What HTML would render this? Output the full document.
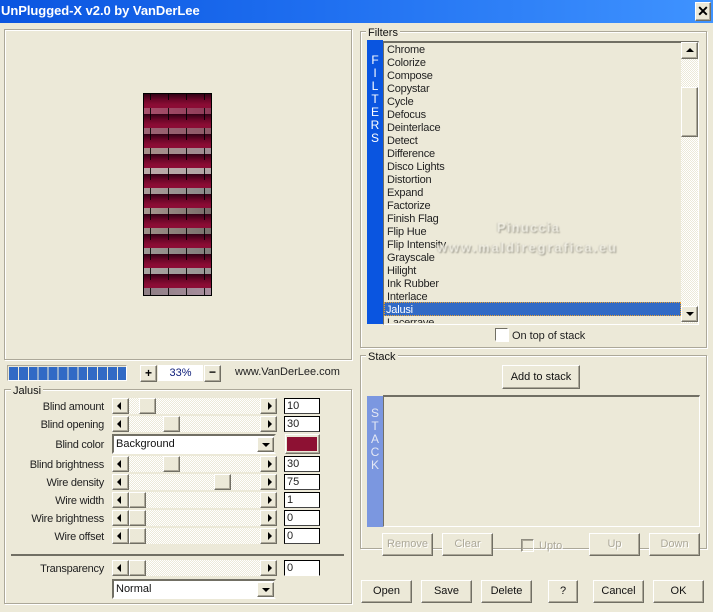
<!DOCTYPE html>
<html><head><meta charset="utf-8"><title>UnPlugged-X</title>
<style>
html,body{margin:0;padding:0;width:713px;height:612px;overflow:hidden;background:#ece9d8}
body{position:relative;font:11px/14px "Liberation Sans",sans-serif;color:#111}
div,span{position:absolute;box-sizing:border-box}
.t{white-space:nowrap}
.g{border:1px solid #aca899;box-shadow:inset 1px 1px 0 #fff,1px 1px 0 #fff}
.gl{background:#ece9d8;padding:0 2px;height:14px;white-space:nowrap}
.b{background:#ece9d8;border:1px solid;border-color:#fff #716f64 #716f64 #fff;box-shadow:inset -1px -1px 0 #aca899;text-align:center;white-space:nowrap}
.bt{height:23px;line-height:21px;top:0}
.dis{color:#aca899;text-shadow:1px 1px 0 #fff}
.sb{left:112px;width:165px;height:16px;background:repeating-conic-gradient(#ece9d8 0 25%,#fff 0 50%) 0 0/2px 2px}
.ar{width:17px;height:16px;top:0}
.l{left:4px;border-style:solid;border-width:4px 4px 4px 0;border-color:transparent #000;top:3px;width:0;height:0}
.r{left:7px;border-style:solid;border-width:4px 0 4px 4px;border-color:transparent #000;top:3px;width:0;height:0}
.u{border-style:solid;border-width:0 4px 4px;border-color:transparent transparent #000;width:0;height:0;left:5px;top:6px}
.d{border-style:solid;border-width:4px 4px 0;border-color:#000 transparent transparent;width:0;height:0;left:5px;top:6px}
.th{width:17px;height:16px;top:0}
.lb{width:100px;left:4px;text-align:right;white-space:nowrap;color:#222;letter-spacing:-.25px}
.e{left:284px;width:36px;height:16px;background:#fff;border:1px solid #000;border-bottom-color:#444;padding-left:2px;line-height:14px;color:#222}
.cb{left:112px;width:164px;height:20px;background:#fff;border:2px solid;border-color:#716f64 #ece9d8 #fff #716f64;padding-left:2px;line-height:17px;white-space:nowrap}
.it{left:387px;white-space:nowrap;height:13px;line-height:13px;color:#222;letter-spacing:-.2px}
.vl{color:#fff;left:367px;width:16px;text-align:center;height:13px;line-height:13px;font-size:12px}
.wm{font:bold 13px/16px 'Liberation Sans',sans-serif;color:#f3f1e6;text-shadow:1px 1px 1px #9a978a,-1px 0 1px #c8c5b8;white-space:nowrap;filter:blur(.4px)}
</style></head><body>

<!-- title bar -->
<div style="left:0;top:0;width:713px;height:23px;background:linear-gradient(90deg,#0a55e0,#1f6ff0 45%,#3f93ff)"></div>
<div class="t" style="left:1px;top:2px;font:bold 13px/17px 'Liberation Sans',sans-serif;color:#fff;letter-spacing:-.05px">UnPlugged-X v2.0 by VanDerLee</div>
<div class="b" style="left:695px;top:2px;width:16px;height:19px;font:bold 14px/16px 'Liberation Sans',sans-serif;color:#000">✕</div>

<!-- preview -->
<div class="g" style="left:4px;top:29px;width:348px;height:331px"></div>
<svg style="position:absolute;left:143px;top:93px" width="69" height="203" viewBox="0 0 69 203">
<defs>
<linearGradient id="dk" x1="0" y1="0" x2="0" y2="1"><stop offset="0" stop-color="#300014"/><stop offset=".4" stop-color="#6a0628"/><stop offset=".75" stop-color="#8a0c34"/><stop offset="1" stop-color="#8c0c36"/></linearGradient>
<linearGradient id="s1"><stop offset="0" stop-color="#a8506c"/><stop offset="1" stop-color="#8e3c58"/></linearGradient>
<linearGradient id="s2"><stop offset="0" stop-color="#9c6474"/><stop offset="1" stop-color="#8e5a68"/></linearGradient>
<linearGradient id="s3"><stop offset="0" stop-color="#a68e88"/><stop offset="1" stop-color="#a08c94"/></linearGradient>
<linearGradient id="s4"><stop offset="0" stop-color="#bcaaa8"/><stop offset="1" stop-color="#b0a4a4"/></linearGradient>
<linearGradient id="s5"><stop offset="0" stop-color="#ab9b98"/><stop offset="1" stop-color="#888888"/></linearGradient>
<linearGradient id="s6"><stop offset="0" stop-color="#a89890"/><stop offset="1" stop-color="#776a68"/></linearGradient>
<linearGradient id="s7"><stop offset="0" stop-color="#9e9088"/><stop offset="1" stop-color="#78706c"/></linearGradient>
<linearGradient id="s8"><stop offset="0" stop-color="#9e9894"/><stop offset="1" stop-color="#807c7a"/></linearGradient>
<linearGradient id="s9"><stop offset="0" stop-color="#a8a4a0"/><stop offset="1" stop-color="#989494"/></linearGradient>
<linearGradient id="s10"><stop offset="0" stop-color="#8e7e84"/><stop offset="1" stop-color="#a88e9e"/></linearGradient>
</defs>
<rect width="69" height="203" fill="#000"/>
<rect x="1" y="1" width="67" height="14" fill="url(#dk)"/>
<rect x="1" y="21" width="67" height="14" fill="url(#dk)"/>
<rect x="1" y="41" width="67" height="14" fill="url(#dk)"/>
<rect x="1" y="61" width="67" height="14" fill="url(#dk)"/>
<rect x="1" y="81" width="67" height="14" fill="url(#dk)"/>
<rect x="1" y="101" width="67" height="14" fill="url(#dk)"/>
<rect x="1" y="121" width="67" height="14" fill="url(#dk)"/>
<rect x="1" y="141" width="67" height="14" fill="url(#dk)"/>
<rect x="1" y="161" width="67" height="14" fill="url(#dk)"/>
<rect x="1" y="181" width="67" height="14" fill="url(#dk)"/>
<rect x="1" y="15" width="67" height="6" fill="url(#s1)"/>
<rect x="1" y="35" width="67" height="6" fill="url(#s2)"/>
<rect x="1" y="55" width="67" height="6" fill="url(#s3)"/>
<rect x="1" y="75" width="67" height="6" fill="url(#s4)"/>
<rect x="1" y="95" width="67" height="6" fill="url(#s5)"/>
<rect x="1" y="115" width="67" height="6" fill="url(#s6)"/>
<rect x="1" y="135" width="67" height="6" fill="url(#s7)"/>
<rect x="1" y="155" width="67" height="6" fill="url(#s8)"/>
<rect x="1" y="175" width="67" height="6" fill="url(#s9)"/>
<rect x="1" y="195" width="67" height="7" fill="url(#s10)"/>
<g stroke="#000" stroke-width="1" stroke-dasharray="12 8" stroke-opacity=".85">
<line x1="7.5" y1="-5" x2="7.5" y2="202"/>
<line x1="25.5" y1="-5" x2="25.5" y2="202"/>
<line x1="43.5" y1="-5" x2="43.5" y2="202"/>
<line x1="61.5" y1="-5" x2="61.5" y2="202"/>
</g>
</svg>

<!-- zoom row -->
<div style="left:7px;top:365px;width:120px;height:16px;border:1px solid;border-color:#aca899 #fff #fff #aca899"></div>
<div style="left:9px;top:367px;width:117px;height:13px;background:repeating-linear-gradient(90deg,#316ac5 0 8.9px,#ece9d8 8.9px 9.9px)"></div>
<div class="b" style="left:140px;top:365px;width:17px;height:17px;font:bold 12px/14px 'Liberation Sans',sans-serif;color:#000">+</div>
<div style="left:158px;top:365px;width:45px;height:16px;background:#fff;text-align:center;color:#0a1a78;line-height:16px">33%</div>
<div class="b" style="left:204px;top:365px;width:17px;height:17px;font:bold 12px/13px 'Liberation Sans',sans-serif;color:#000">−</div>
<div class="t" style="left:235px;top:365px;color:#222">www.VanDerLee.com</div>

<!-- Jalusi group -->
<div class="g" style="left:4px;top:389px;width:348px;height:215px"></div>
<div class="gl" style="left:11px;top:384px">Jalusi</div>

<div class="lb" style="top:400px">Blind amount</div>
<div class="sb" style="top:398px"><div class="b ar" style="left:0"><span class="l"></span></div><div class="b th" style="left:27px"></div><div class="b ar" style="left:148px"><span class="r"></span></div></div>
<div class="e" style="top:398px">10</div>

<div class="lb" style="top:418px">Blind opening</div>
<div class="sb" style="top:416px"><div class="b ar" style="left:0"><span class="l"></span></div><div class="b th" style="left:51px"></div><div class="b ar" style="left:148px"><span class="r"></span></div></div>
<div class="e" style="top:416px">30</div>

<div class="lb" style="top:438px">Blind color</div>
<div class="cb" style="top:434px">Background<div class="b" style="left:143px;top:1px;width:17px;height:15px"><span class="d" style="top:5px;left:4px"></span></div></div>
<div class="b" style="left:285px;top:434px;width:35px;height:20px"><div style="left:1px;top:2px;width:30px;height:14px;background:#8d1133"></div></div>

<div class="lb" style="top:458px">Blind brightness</div>
<div class="sb" style="top:456px"><div class="b ar" style="left:0"><span class="l"></span></div><div class="b th" style="left:51px"></div><div class="b ar" style="left:148px"><span class="r"></span></div></div>
<div class="e" style="top:456px">30</div>

<div class="lb" style="top:476px">Wire density</div>
<div class="sb" style="top:474px"><div class="b ar" style="left:0"><span class="l"></span></div><div class="b th" style="left:102px"></div><div class="b ar" style="left:148px"><span class="r"></span></div></div>
<div class="e" style="top:474px">75</div>

<div class="lb" style="top:494px">Wire width</div>
<div class="sb" style="top:492px"><div class="b ar" style="left:0"><span class="l"></span></div><div class="b th" style="left:17px"></div><div class="b ar" style="left:148px"><span class="r"></span></div></div>
<div class="e" style="top:492px">1</div>

<div class="lb" style="top:512px">Wire brightness</div>
<div class="sb" style="top:510px"><div class="b ar" style="left:0"><span class="l"></span></div><div class="b th" style="left:17px"></div><div class="b ar" style="left:148px"><span class="r"></span></div></div>
<div class="e" style="top:510px">0</div>

<div class="lb" style="top:530px">Wire offset</div>
<div class="sb" style="top:528px"><div class="b ar" style="left:0"><span class="l"></span></div><div class="b th" style="left:17px"></div><div class="b ar" style="left:148px"><span class="r"></span></div></div>
<div class="e" style="top:528px">0</div>

<div style="left:11px;top:554px;width:333px;height:2px;background:#716f64"></div>

<div class="lb" style="top:562px">Transparency</div>
<div class="sb" style="top:560px"><div class="b ar" style="left:0"><span class="l"></span></div><div class="b th" style="left:17px"></div><div class="b ar" style="left:148px"><span class="r"></span></div></div>
<div class="e" style="top:560px;border-bottom-color:#fff">0</div>

<div class="cb" style="top:579px">Normal<div class="b" style="left:143px;top:1px;width:17px;height:15px"><span class="d" style="top:5px;left:4px"></span></div></div>

<!-- Filters group -->
<div class="g" style="left:360px;top:31px;width:347px;height:317px"></div>
<div class="gl" style="left:366px;top:26px">Filters</div>
<div style="left:367px;top:40px;width:16px;height:284px;background:#0a55e0"></div>
<div class="vl" style="top:54px">F</div>
<div class="vl" style="top:67px">I</div>
<div class="vl" style="top:80px">L</div>
<div class="vl" style="top:93px">T</div>
<div class="vl" style="top:106px">E</div>
<div class="vl" style="top:119px">R</div>
<div class="vl" style="top:132px">S</div>
<div style="left:383px;top:41px;width:316px;height:284px;border:2px solid;border-color:#716f64 #fff #fff #716f64;border-width:2px 1px 1px 1px;overflow:hidden"></div>

<div class="it" style="top:44px">Chrome</div>
<div class="it" style="top:57px">Colorize</div>
<div class="it" style="top:70px">Compose</div>
<div class="it" style="top:83px">Copystar</div>
<div class="it" style="top:96px">Cycle</div>
<div class="it" style="top:109px">Defocus</div>
<div class="it" style="top:122px">Deinterlace</div>
<div class="it" style="top:135px">Detect</div>
<div class="it" style="top:148px">Difference</div>
<div class="it" style="top:161px">Disco Lights</div>
<div class="it" style="top:174px">Distortion</div>
<div class="it" style="top:187px">Expand</div>
<div class="it" style="top:200px">Factorize</div>
<div class="it" style="top:213px">Finish Flag</div>
<div class="it" style="top:226px">Flip Hue</div>
<div class="it" style="top:239px">Flip Intensity</div>
<div class="it" style="top:252px">Grayscale</div>
<div class="it" style="top:265px">Hilight</div>
<div class="it" style="top:278px">Ink Rubber</div>
<div class="it" style="top:291px">Interlace</div>
<div style="left:384px;top:302px;width:297px;height:14px;background:#316ac5;border:1px dotted #e8a030"></div>
<div class="it" style="top:304px;left:386px;color:#fff">Jalusi</div>
<div style="left:385px;top:316px;width:200px;height:7px;overflow:hidden"><div class="it" style="left:2px;top:1px">Lacerrave</div></div>

<!-- list scrollbar -->
<div style="left:681px;top:42px;width:17px;height:281px;background:repeating-conic-gradient(#ece9d8 0 25%,#fff 0 50%) 0 0/2px 2px"></div>
<div class="b" style="left:681px;top:42px;width:17px;height:17px"><span class="u" style="left:4px;top:5px"></span></div>
<div class="b" style="left:681px;top:87px;width:17px;height:50px"></div>
<div class="b" style="left:681px;top:306px;width:17px;height:16px"><span class="d" style="left:4px;top:5px"></span></div>

<!-- watermark -->
<div class="wm" style="left:497px;top:220px;letter-spacing:1.2px">Pinuccia</div>
<div class="wm" style="left:437px;top:240px;letter-spacing:1.9px">www.maldiregrafica.eu</div>

<!-- on top -->
<div style="left:495px;top:328px;width:13px;height:13px;background:#fff;border:1px solid;border-color:#716f64 #fff #fff #716f64;box-shadow:1px 1px 0 #fff"></div>
<div class="t" style="left:512px;top:329px;color:#222;letter-spacing:-.05px">On top of stack</div>

<!-- Stack group -->
<div class="g" style="left:360px;top:355px;width:347px;height:194px"></div>
<div class="gl" style="left:366px;top:350px">Stack</div>
<div class="b" style="left:502px;top:365px;width:78px;height:24px;line-height:22px">Add to stack</div>
<div style="left:367px;top:396px;width:16px;height:131px;background:#7b97e0"></div>
<div class="vl" style="top:407px;color:#e4e8f4">S</div>
<div class="vl" style="top:420px;color:#e4e8f4">T</div>
<div class="vl" style="top:433px;color:#e4e8f4">A</div>
<div class="vl" style="top:446px;color:#e4e8f4">C</div>
<div class="vl" style="top:459px;color:#e4e8f4">K</div>
<div style="left:383px;top:395px;width:317px;height:132px;border-style:solid;border-width:2px 1px 1px 1px;border-color:#716f64 #fff #fff #716f64"></div>

<div class="b bt dis" style="left:382px;top:533px;width:51px">Remove</div>
<div class="b bt dis" style="left:442px;top:533px;width:51px">Clear</div>
<div style="left:521px;top:539px;width:13px;height:13px;border:1px solid;border-color:#8f8c80 #fff #fff #8f8c80;box-shadow:inset 1px 1px 0 #aca899"></div>
<div class="t dis" style="left:539px;top:539px">Upto</div>
<div class="b bt dis" style="left:589px;top:533px;width:51px">Up</div>
<div class="b bt dis" style="left:649px;top:533px;width:51px">Down</div>

<!-- bottom buttons -->
<div class="b bt" style="left:361px;top:580px;width:51px">Open</div>
<div class="b bt" style="left:421px;top:580px;width:51px">Save</div>
<div class="b bt" style="left:481px;top:580px;width:51px">Delete</div>
<div class="b bt" style="left:548px;top:580px;width:30px">?</div>
<div class="b bt" style="left:593px;top:580px;width:51px">Cancel</div>
<div class="b bt" style="left:653px;top:580px;width:51px">OK</div>
</body></html>
